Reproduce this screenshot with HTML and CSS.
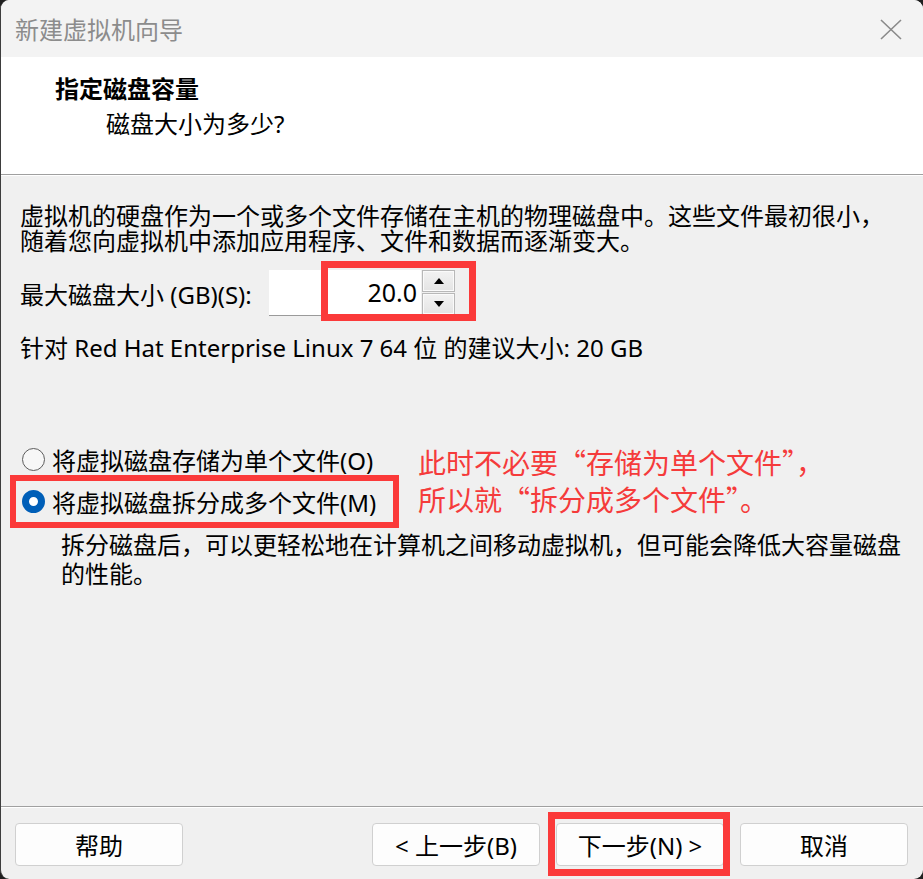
FILE: index.html
```html
<!DOCTYPE html>
<html lang="zh-CN">
<head>
<meta charset="utf-8">
<title>新建虚拟机向导</title>
<link rel="stylesheet" href="styles.css">
</head>
<body>
<div class="window">
  <div class="titlebar">
    <span class="title">新建虚拟机向导</span>
    <svg class="close" width="22" height="21" viewBox="0 0 22 21"><path d="M1 1 L21 20 M21 1 L1 20" stroke="#8a8a8a" stroke-width="1.6" fill="none"/></svg>
  </div>
  <div class="header">
    <div class="h1">指定磁盘容量</div>
    <div class="sub">磁盘大小为多少?</div>
  </div>
  <div class="body">
    <p class="intro">虚拟机的硬盘作为一个或多个文件存储在主机的物理磁盘中。这些文件最初很小，<br>随着您向虚拟机中添加应用程序、文件和数据而逐渐变大。</p>
    <div class="size-row">
      <span class="size-label">最大磁盘大小 (GB)(S):</span>
      <div class="spin">
        <div class="spin-input">20.0</div>
        <div class="spin-btns">
          <div class="spin-btn"><svg width="10" height="6" viewBox="0 0 10 6"><path d="M5 0 L10 6 L0 6 Z" fill="#000"/></svg></div>
          <div class="spin-btn"><svg width="10" height="6" viewBox="0 0 10 6"><path d="M0 0 L10 0 L5 6 Z" fill="#000"/></svg></div>
        </div>
      </div>
    </div>
    <p class="rec">针对 Red Hat Enterprise Linux 7 64 位 的建议大小: 20 GB</p>
    <div class="options">
      <div class="radios">
        <div class="radio-row"><span class="radio"></span><span>将虚拟磁盘存储为单个文件(O)</span></div>
        <div class="radio-row"><span class="radio checked"></span><span>将虚拟磁盘拆分成多个文件(M)</span></div>
      </div>
      <div class="note">此时不必要“存储为单个文件”，<br>所以就“拆分成多个文件”。</div>
    </div>
    <p class="desc">拆分磁盘后，可以更轻松地在计算机之间移动虚拟机，但可能会降低大容量磁盘<br>的性能。</p>
  </div>
  <div class="footer">
    <button class="btn">帮助</button>
    <div class="nav">
      <button class="btn">&lt; 上一步(B)</button>
      <button class="btn">下一步(N) &gt;</button>
      <button class="btn">取消</button>
    </div>
  </div>
  <div class="mark mark-spin"></div>
  <div class="mark mark-radio"></div>
  <div class="mark mark-next"></div>
</div>
</body>
</html>
```
FILE: styles.css
```css
html, body {
  margin: 0;
  padding: 0;
  background: #1f1f1f;
}
body {
  font-family: "Noto Sans", "Noto Sans CJK SC", sans-serif;
  font-size: 24px;
  color: #000;
}
.window {
  position: relative;
  width: 922px;
  height: 879px;
  border-left: 1px solid #3d3d3d;
  border-radius: 9px;
  overflow: hidden;
  display: flex;
  flex-direction: column;
  background: #f0f0f0;
}
.titlebar {
  height: 57px;
  flex: none;
  background: #f3f3f3;
  display: flex;
  align-items: center;
  justify-content: space-between;
  padding: 0 21px 0 14px;
}
.title {
  color: #8c8c8c;
  font-family: "Noto Sans CJK SC", sans-serif;
  font-size: 24px;
  line-height: 28px;
}
.close {
  display: block;
  margin-top: 1px;
}
.header {
  height: 117px;
  flex: none;
  background: #fff;
  border-bottom: 1px solid #a0a0a0;
  padding-top: 17px;
  box-sizing: border-box;
  height: 118px;
}
.h1 {
  margin-left: 54px;
  font-weight: bold;
  line-height: 28px;
  font-family: "Noto Sans CJK SC", sans-serif;
}
.sub {
  margin-left: 105px;
  margin-top: 8px;
  line-height: 28px;
}
.body {
  flex: 1;
  padding: 28px 0 0 19px;
  box-shadow: inset 0 1px #ffffff;
}
.intro {
  margin: 0;
  line-height: 25px;
  white-space: nowrap;
}
.size-row {
  margin-top: 17px;
  height: 46px;
  display: flex;
  align-items: center;
}
.size-label {
  width: 249px;
  flex: none;
  white-space: nowrap;
}
.spin {
  display: flex;
  height: 46px;
}
.spin-input {
  width: 148px;
  height: 45px;
  background: #fff;
  border-bottom: 1px solid #9a9a9a;
  text-align: right;
  padding-right: 4px;
  line-height: 44px;
  font-size: 25px;
}
.spin-btns {
  display: flex;
  flex-direction: column;
  gap: 1px;
  margin-left: 1px;
  height: 45px;
}
.spin-btn {
  width: 31px;
  height: 21px;
  border: 1px solid #b8b8b8;
  background: linear-gradient(#f2f2f2, #e4e4e4);
  box-shadow: inset 0 0 0 1px #fafafa;
  display: flex;
  align-items: center;
  justify-content: center;
}
.spin-btn svg { display: block; }
.rec {
  margin: 19px 0 0;
  line-height: 25px;
  white-space: nowrap;
}
.options {
  margin-top: 78px;
  display: flex;
}
.radios {
  width: 398px;
  flex: none;
}
.radio-row {
  height: 42px;
  display: flex;
  align-items: center;
  white-space: nowrap;
}
.radio {
  width: 23px;
  height: 23px;
  box-sizing: border-box;
  border: 1.5px solid #5c5c5c;
  border-radius: 50%;
  background: #f7f7f7;
  margin: 0 7px 0 2px;
  flex: none;
}
.radio.checked {
  border: 7px solid #005fb8;
  background: #fff;
}
.note {
  color: #f53b3b;
  font-family: "Noto Sans CJK SC", sans-serif;
  font-size: 28px;
  line-height: 37px;
  margin-top: 6px;
  white-space: nowrap;
}
.desc {
  margin: 8px 0 0 41px;
  line-height: 29px;
  white-space: nowrap;
}
.footer {
  height: 73px;
  flex: none;
  box-sizing: border-box;
  border-top: 1px solid #a0a0a0;
  box-shadow: inset 0 1px #ffffff;
  padding: 16px 15px 0 14px;
  display: flex;
  justify-content: space-between;
  align-items: flex-start;
}
.nav {
  display: flex;
  gap: 16px;
}
.btn {
  width: 168px;
  height: 43px;
  background: #fdfdfd;
  border: 1px solid #d0d0d0;
  border-radius: 4px;
  font-family: "Noto Sans", "Noto Sans CJK SC", sans-serif;
  font-size: 24px;
  color: #000;
  padding: 0;
}
.mark {
  position: absolute;
  border-style: solid;
  border-color: #fb3a3a;
  box-sizing: border-box;
}
.mark-spin {
  left: 320px;
  top: 261px;
  width: 155px;
  height: 60px;
  border-width: 7px;
}
.mark-radio {
  left: 9px;
  top: 475px;
  width: 389px;
  height: 53px;
  border-width: 6px;
}
.mark-next {
  left: 547px;
  top: 812px;
  width: 182px;
  height: 64px;
  border-width: 7px;
}
```
